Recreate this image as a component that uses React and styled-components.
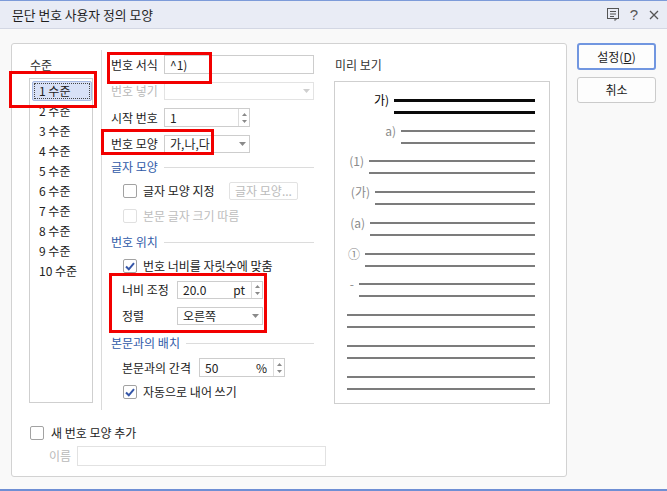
import React from 'react';
import styled, { createGlobalStyle } from 'styled-components';

const Global = createGlobalStyle`
  html, body { margin: 0; padding: 0; background: #f9f9f9; }
  body {
    font-family: "Noto Sans CJK KR", "Noto Sans", sans-serif;
    font-size: 12px;
    letter-spacing: 0;
    color: #222;
  }
  * { box-sizing: border-box; }
`;

const Window = styled.div`
  position: relative;
  width: 667px;
  height: 491px;
  display: flex;
  flex-direction: column;
  background: #f9f9f9;
  border-top: 1px solid #7d9bd9;
  border-bottom: 2px solid #6f8fd4;
  overflow: hidden;
`;

const TitleBar = styled.div`
  height: 28px;
  flex: none;
  display: flex;
  align-items: center;
  padding: 0 8px 0 12px;
  background: #e9ecf5;
  border-bottom: 1px solid #d3d7e3;
`;

const Title = styled.div`
  font-size: 12.8px;
  line-height: 16px;
  color: #1e1e1e;
`;

const TitleIcons = styled.div`
  margin-left: auto;
  display: flex;
  align-items: center;
  gap: 11px;
  color: #555;
`;

const QMark = styled.span`
  font-family: "Liberation Sans", sans-serif;
  font-size: 15px;
  line-height: 16px;
  color: #555;
`;

const Body = styled.div`
  flex: 1;
  display: flex;
  align-items: flex-start;
  gap: 10px;
  padding: 14px 0 0 11px;
`;

const Panel = styled.div`
  width: 556px;
  height: 434px;
  flex: none;
  display: flex;
  flex-direction: column;
  background: #fff;
  border: 1px solid #d2d2d2;
  border-radius: 3px;
  padding-top: 6px;
`;

const TopArea = styled.div`
  height: 360px;
  display: flex;
  align-items: flex-start;
`;

const LeftCol = styled.div`
  margin-left: 17px;
  width: 64px;
  padding-top: 7px;
`;

const ColLabel = styled.div`
  height: 16px;
  line-height: 16px;
  padding-left: 1px;
  color: #333;
`;

const LevelList = styled.div`
  margin-top: 5px;
  height: 325px;
  border: 1px solid #cfcfcf;
  padding: 2px 0 0 2px;
`;

const LevelItem = styled.div`
  height: 20px;
  line-height: 18px;
  padding-left: 6px;
  border: 1px solid ${p => (p.$sel ? '#a9bbe3' : 'transparent')};
  border-radius: 2px;
  background: ${p => (p.$sel ? '#d8e1f7' : 'transparent')};
  outline: ${p => (p.$sel ? '1px dotted #444' : 'none')};
  outline-offset: -3px;
  color: #222;
`;

const Separator = styled.div`
  margin-left: 8px;
  width: 1px;
  align-self: stretch;
  background: #dadada;
`;

const MidCol = styled.div`
  width: 212px;
  padding: 5px 0 0 9px;
  display: flex;
  flex-direction: column;
`;

const FieldRow = styled.div`
  display: flex;
  align-items: center;
  height: ${p => p.$h || 18}px;
  margin-top: ${p => p.$mt || 0}px;
  padding-left: ${p => p.$indent || 0}px;
`;

const FieldLabel = styled.div`
  width: ${p => p.$w}px;
  flex: none;
  line-height: 16px;
  white-space: nowrap;
  color: ${p => (p.$disabled ? '#b9b9b9' : '#222')};
`;

const TextInput = styled.div`
  width: ${p => p.$w}px;
  height: 100%;
  border: 1px solid #cdcdcd;
  background: #fff;
  padding-left: 5px;
  line-height: 16px;
  display: flex;
  align-items: center;
  color: #222;
`;

const BoxField = styled.div`
  width: ${p => p.$w}px;
  height: 100%;
  border: 1px solid ${p => (p.$disabled ? '#e3e3e3' : '#cdcdcd')};
  background: #fff;
  display: flex;
  align-items: stretch;
`;

const BoxValue = styled.div`
  flex: 1;
  display: flex;
  align-items: center;
  padding: 0 6px 0 5px;
  line-height: 16px;
  color: #222;
`;

const Unit = styled.span`
  margin-left: auto;
  color: #222;
`;

const ArrowCell = styled.div`
  width: 13px;
  flex: none;
  display: flex;
  align-items: center;
  justify-content: center;
`;

const SpinCell = styled.div`
  width: 11px;
  flex: none;
  border-left: 1px solid #dcdcdc;
  display: flex;
  flex-direction: column;
  align-items: center;
  justify-content: center;
  gap: 4px;
`;

const SectionHeading = styled.div`
  display: flex;
  align-items: center;
  height: 16px;
  margin-top: ${p => p.$mt || 0}px;
  color: #2f5aa8;
  line-height: 16px;
  white-space: nowrap;
  &::after {
    content: '';
    flex: 1;
    height: 1px;
    margin-left: 6px;
    background: #dcdcdc;
  }
`;

const CheckRow = styled.div`
  display: flex;
  align-items: center;
  height: 18px;
  margin-top: ${p => p.$mt || 0}px;
  padding-left: ${p => p.$indent || 0}px;
  color: ${p => (p.$disabled ? '#bdbdbd' : '#222')};
  line-height: 16px;
  white-space: nowrap;
`;

const CheckBox = styled.div`
  width: 14px;
  height: 14px;
  flex: none;
  border: 1px solid ${p => (p.$disabled ? '#e0e0e0' : '#a2a2a2')};
  border-radius: 2px;
  background: #fff;
  margin-right: ${p => p.$gap || 6}px;
  display: flex;
  align-items: center;
  justify-content: center;
`;

const SmallButton = styled.div`
  margin-left: auto;
  margin-right: ${p => p.$mr || 0}px;
  width: 69px;
  height: 18px;
  border: 1px solid #e2e2e2;
  border-radius: 2px;
  background: #fff;
  color: #bbb;
  line-height: 16px;
  text-align: center;
`;

const PreviewCol = styled.div`
  margin-left: 20px;
  width: 216px;
  padding-top: 7px;
`;

const PreviewBox = styled.div`
  margin-top: 8px;
  height: 323px;
  border: 1px solid #cfcfcf;
  padding: 11px 14px 0 12px;
`;

const Group = styled.div`
  display: grid;
  grid-template-columns: ${p => p.$w}px 1fr;
  grid-template-rows: 14px 10px;
  margin-top: ${p => p.$mt}px;
`;

const Num = styled.div`
  grid-row: 1;
  grid-column: 1;
  text-align: right;
  padding-right: 5px;
  white-space: nowrap;
  font-size: 12px;
  line-height: 14px;
  color: ${p => (p.$dark ? '#000' : '#8a8a8a')};
`;

const Bar = styled.div`
  grid-column: 2;
  grid-row: ${p => p.$row};
  align-self: center;
  height: ${p => (p.$dark ? 3 : 2)}px;
  background: ${p => (p.$dark ? '#0a0a0a' : '#7c7c7c')};
`;

const BottomArea = styled.div`
  padding-left: 17px;
  display: flex;
  flex-direction: column;
`;

const NameInput = styled.div`
  width: 249px;
  height: 20px;
  border: 1px solid #e2e2e2;
  background: #fff;
`;

const Buttons = styled.div`
  display: flex;
  flex-direction: column;
  gap: 7px;
`;

const Button = styled.div`
  width: 79px;
  height: ${p => (p.$primary ? 27 : 26)}px;
  border: ${p => (p.$primary ? '2px solid #7196e0' : '1px solid #cbcbcb')};
  border-radius: 3px;
  background: #fdfdfd;
  display: flex;
  align-items: center;
  justify-content: center;
  color: #222;
  line-height: 16px;
  u { text-decoration: underline; }
`;

const Highlight = styled.div`
  position: absolute;
  left: ${p => p.$x}px;
  top: ${p => p.$y}px;
  width: ${p => p.$w}px;
  height: ${p => p.$h}px;
  border: 3px solid #f20000;
  pointer-events: none;
`;

const DownArrow = ({ disabled }) => (
  <svg width="7" height="4" viewBox="0 0 7 4">
    <path d="M0 0 L7 0 L3.5 4 Z" fill={disabled ? '#cfcfcf' : '#8a8a8a'} />
  </svg>
);

const SpinArrows = () => (
  <SpinCell>
    <svg width="5" height="3" viewBox="0 0 5 3"><path d="M2.5 0 L5 3 L0 3 Z" fill="#8a8a8a" /></svg>
    <svg width="5" height="3" viewBox="0 0 5 3"><path d="M0 0 L5 0 L2.5 3 Z" fill="#8a8a8a" /></svg>
  </SpinCell>
);

const Check = () => (
  <svg width="10" height="9" viewBox="0 0 10 9">
    <path d="M1 4.5 L3.8 7.3 L9 1.2" fill="none" stroke="#3556a8" strokeWidth="2" />
  </svg>
);

const levels = ['1 수준', '2 수준', '3 수준', '4 수준', '5 수준', '6 수준', '7 수준', '8 수준', '9 수준', '10 수준'];

const preview = [
  { num: '가)', w: 47, y: 100, dark: true },
  { num: 'a)', w: 54, y: 131 },
  { num: '(1)', w: 22, y: 161 },
  { num: '(가)', w: 28, y: 192 },
  { num: '(a)', w: 23, y: 223 },
  { num: '①', w: 18, y: 254 },
  { num: '-', w: 12, y: 284 },
  { num: '', w: 0, y: 315 },
  { num: '', w: 0, y: 346 },
  { num: '', w: 0, y: 377 },
];

export default function App() {
  return (
    <>
      <Global />
      <Window>
        <TitleBar>
          <Title>문단 번호 사용자 정의 모양</Title>
          <TitleIcons>
            <svg width="12" height="13" viewBox="0 0 12 13">
              <rect x="0.5" y="0.5" width="11" height="10" fill="none" stroke="#555" />
              <path d="M3 3.5 H9 M3 6 H9 M3 8.5 H7" stroke="#555" />
              <path d="M8 10.5 L8 12.5 L10 10.5" fill="none" stroke="#555" />
            </svg>
            <QMark>?</QMark>
            <svg width="10" height="10" viewBox="0 0 10 10">
              <path d="M1 1 L9 9 M9 1 L1 9" stroke="#555" strokeWidth="1.3" />
            </svg>
          </TitleIcons>
        </TitleBar>

        <Body>
          <Panel>
            <TopArea>
              <LeftCol>
                <ColLabel>수준</ColLabel>
                <LevelList>
                  {levels.map((l, i) => (
                    <LevelItem key={l} $sel={i === 0}>{l}</LevelItem>
                  ))}
                </LevelList>
              </LeftCol>

              <Separator />

              <MidCol>
                <FieldRow $h={19}>
                  <FieldLabel $w={53}>번호 서식</FieldLabel>
                  <TextInput $w={150}>^1)</TextInput>
                </FieldRow>
                <FieldRow $mt={8}>
                  <FieldLabel $w={53} $disabled>번호 넣기</FieldLabel>
                  <BoxField $w={150} $disabled>
                    <BoxValue />
                    <ArrowCell><DownArrow disabled /></ArrowCell>
                  </BoxField>
                </FieldRow>
                <FieldRow $mt={8} $h={19}>
                  <FieldLabel $w={53}>시작 번호</FieldLabel>
                  <BoxField $w={86}>
                    <BoxValue>1</BoxValue>
                    <SpinArrows />
                  </BoxField>
                </FieldRow>
                <FieldRow $mt={8}>
                  <FieldLabel $w={53}>번호 모양</FieldLabel>
                  <BoxField $w={86}>
                    <BoxValue>가,나,다</BoxValue>
                    <ArrowCell><DownArrow /></ArrowCell>
                  </BoxField>
                </FieldRow>

                <SectionHeading $mt={6}>글자 모양</SectionHeading>
                <CheckRow $mt={7} $indent={12}>
                  <CheckBox />
                  글자 모양 지정
                  <SmallButton $mr={16}>글자 모양...</SmallButton>
                </CheckRow>
                <CheckRow $mt={7} $indent={12} $disabled>
                  <CheckBox $disabled />
                  본문 글자 크기 따름
                </CheckRow>

                <SectionHeading $mt={9}>번호 위치</SectionHeading>
                <CheckRow $mt={7} $indent={12}>
                  <CheckBox><Check /></CheckBox>
                  번호 너비를 자릿수에 맞춤
                </CheckRow>
                <FieldRow $mt={6} $indent={11}>
                  <FieldLabel $w={55}>너비 조정</FieldLabel>
                  <BoxField $w={86}>
                    <BoxValue>20.0<Unit>pt</Unit></BoxValue>
                    <SpinArrows />
                  </BoxField>
                </FieldRow>
                <FieldRow $mt={8} $indent={11}>
                  <FieldLabel $w={55}>정렬</FieldLabel>
                  <BoxField $w={86}>
                    <BoxValue>오른쪽</BoxValue>
                    <ArrowCell><DownArrow /></ArrowCell>
                  </BoxField>
                </FieldRow>

                <SectionHeading $mt={10}>본문과의 배치</SectionHeading>
                <FieldRow $mt={7} $h={19} $indent={11}>
                  <FieldLabel $w={77}>본문과의 간격</FieldLabel>
                  <BoxField $w={86}>
                    <BoxValue>50<Unit>%</Unit></BoxValue>
                    <SpinArrows />
                  </BoxField>
                </FieldRow>
                <CheckRow $mt={6} $indent={12}>
                  <CheckBox><Check /></CheckBox>
                  자동으로 내어 쓰기
                </CheckRow>
              </MidCol>

              <PreviewCol>
                <ColLabel>미리 보기</ColLabel>
                <PreviewBox>
                  {preview.map((g, i) => (
                    <Group key={i} $w={g.w} $mt={i === 0 ? 0 : g.y - preview[i - 1].y - 24}>
                      <Num $dark={g.dark}>{g.num}</Num>
                      <Bar $row={1} $dark={g.dark} />
                      <Bar $row={2} $dark={g.dark} />
                    </Group>
                  ))}
                </PreviewBox>
              </PreviewCol>
            </TopArea>

            <BottomArea>
              <CheckRow $mt={14} $indent={1}>
                <CheckBox $gap={7} />
                새 번호 모양 추가
              </CheckRow>
              <FieldRow $mt={4} $h={20} $indent={20}>
                <FieldLabel $w={28} $disabled>이름</FieldLabel>
                <NameInput />
              </FieldRow>
            </BottomArea>
          </Panel>

          <Buttons>
            <Button $primary>설정(<u>D</u>)</Button>
            <Button>취소</Button>
          </Buttons>
        </Body>

        <Highlight $x={9} $y={70} $w={88} $h={37} />
        <Highlight $x={107} $y={51} $w={105} $h={32} />
        <Highlight $x={101} $y={128} $w={113} $h={26} />
        <Highlight $x={109} $y={272} $w={158} $h={60} />
      </Window>
    </>
  );
}
